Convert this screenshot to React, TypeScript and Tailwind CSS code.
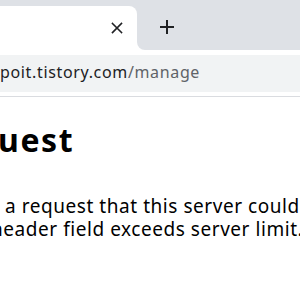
import React from 'react';

const App: React.FC = () => {
  return (
    <div className="w-[300px] h-[300px] overflow-hidden bg-white" style={{ fontFamily: '"Noto Sans", "Noto Sans CJK KR", sans-serif' }}>
      {/* tab strip */}
      <div className="flex h-[50px] bg-[#dee1e6]">
        <div className="w-[137px] pt-[6px] flex flex-col">
          <div className="flex-1 bg-white rounded-tr-[8px] flex items-center justify-end pr-[14px]">
            <svg width="12" height="12" viewBox="0 0 12 12">
              <path d="M1.5 1.5 L10.5 10.5 M10.5 1.5 L1.5 10.5" stroke="#202124" strokeWidth="1.6" strokeLinecap="square" />
            </svg>
          </div>
        </div>
        <div className="flex-1 bg-white">
          <div className="h-full bg-[#dee1e6] rounded-bl-[8px] flex items-center pl-[23px]">
            <svg width="14" height="14" viewBox="0 0 14 14" className="mt-[4px]">
              <path d="M7 0 V14 M0 7 H14" stroke="#202124" strokeWidth="2" />
            </svg>
          </div>
        </div>
      </div>
      {/* toolbar */}
      <div className="h-[47px] bg-white pt-[5px] border-b border-[#dadce0]">
        <div className="h-[37px] bg-[#f1f3f4] flex items-center whitespace-nowrap text-[16px] tracking-[0.65px] leading-none pb-[4px]">
          <span className="text-[#202124]">poit.tistory.com</span>
          <span className="text-[#5f6368]">/manage</span>
        </div>
      </div>
      {/* page */}
      <div className="pt-[23px] text-black whitespace-nowrap">
        <h1 className="text-[32px] leading-[40px] font-bold tracking-[1.6px] ml-[-2px]">uest</h1>
        <p className="mt-[35px] text-[19px] leading-[23px] tracking-[0.55px]">
          <span className="block pl-[5px]">a request that this server could not understand.</span>
          <span className="block ml-[-9px]">header field exceeds server limit.</span>
        </p>
      </div>
    </div>
  );
};

export default App;
